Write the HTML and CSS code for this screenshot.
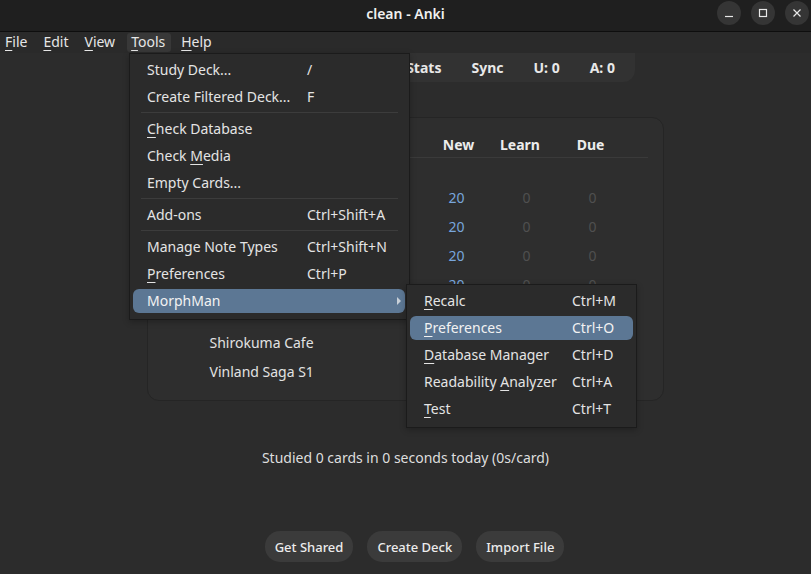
FILE: index.html
```html
<!DOCTYPE html>
<html>
<head>
<meta charset="utf-8">
<title>clean - Anki</title>
<link rel="stylesheet" href="styles.css">
</head>
<body>
<div class="window">
  <header class="titlebar">
    <div></div>
    <div class="title">clean - Anki</div>
    <div class="winbtns">
      <span class="wbtn"><svg width="10" height="10" viewBox="0 0 10 10"><path d="M1 8.5H9" stroke="#e8e8e8" stroke-width="1.2"/></svg></span>
      <span class="wbtn"><svg width="10" height="10" viewBox="0 0 10 10"><rect x="1.5" y="1.5" width="7" height="7" fill="none" stroke="#e8e8e8" stroke-width="1.2"/></svg></span>
      <span class="wbtn"><svg width="10" height="10" viewBox="0 0 10 10"><path d="M1.5 1.5L8.5 8.5M8.5 1.5L1.5 8.5" stroke="#e8e8e8" stroke-width="1.2"/></svg></span>
    </div>
  </header>
  <nav class="menubar">
    <span class="mb"><u>F</u>ile</span>
    <span class="mb"><u>E</u>dit</span>
    <span class="mb"><u>V</u>iew</span>
    <span class="mb active"><u>T</u>ools</span>
    <span class="mb"><u>H</u>elp</span>
  </nav>
  <main class="main">
    <div class="toolbar">
      <span>Decks</span><span>Add</span><span>Browse</span><span>Stats</span><span>Sync</span><span>U: 0</span><span>A: 0</span>
    </div>
    <section class="decks">
      <div class="row head"><span class="name"></span><span>New</span><span class="learn-h">Learn</span><span>Due</span><span></span></div>
      <div class="rule"></div>
      <div class="row"><span class="name">Default</span><span class="new">20</span><span class="zero">0</span><span class="zero">0</span><span></span></div>
      <div class="row"><span class="name">Kaguya-sama</span><span class="new">20</span><span class="zero">0</span><span class="zero">0</span><span></span></div>
      <div class="row"><span class="name">Kimi no Na wa</span><span class="new">20</span><span class="zero">0</span><span class="zero">0</span><span></span></div>
      <div class="row"><span class="name">Mushishi</span><span class="new">20</span><span class="zero">0</span><span class="zero">0</span><span></span></div>
      <div class="row"><span class="name">Natsume</span><span class="new">20</span><span class="zero">0</span><span class="zero">0</span><span></span></div>
      <div class="row"><span class="name">Shirokuma Cafe</span><span class="new">20</span><span class="zero">0</span><span class="zero">0</span><span></span></div>
      <div class="row"><span class="name">Vinland Saga S1</span><span class="new">20</span><span class="zero">0</span><span class="zero">0</span><span></span></div>
    </section>
    <p class="studied">Studied 0 cards in 0 seconds today (0s/card)</p>
    <div class="actions">
      <button class="btn">Get Shared</button>
      <button class="btn">Create Deck</button>
      <button class="btn">Import File</button>
    </div>
  </main>

  <div class="menu tools">
    <div class="mi"><span>Study Deck...</span><span>/</span></div>
    <div class="mi"><span>Create Filtered Deck...</span><span>F</span></div>
    <div class="sep"></div>
    <div class="mi"><span><u>C</u>heck Database</span><span></span></div>
    <div class="mi"><span>Check <u>M</u>edia</span><span></span></div>
    <div class="mi"><span>Empty Cards...</span><span></span></div>
    <div class="sep"></div>
    <div class="mi"><span>Add-ons</span><span>Ctrl+Shift+A</span></div>
    <div class="sep"></div>
    <div class="mi"><span>Manage Note Types</span><span>Ctrl+Shift+N</span></div>
    <div class="mi"><span><u>P</u>references</span><span>Ctrl+P</span></div>
    <div class="mi hl"><span>MorphMan</span><span></span><i class="arrow"></i></div>
  </div>

  <div class="menu sub">
    <div class="mi"><span><u>R</u>ecalc</span><span>Ctrl+M</span></div>
    <div class="mi hl"><span><u>P</u>references</span><span>Ctrl+O</span></div>
    <div class="mi"><span><u>D</u>atabase Manager</span><span>Ctrl+D</span></div>
    <div class="mi"><span>Readability <u>A</u>nalyzer</span><span>Ctrl+A</span></div>
    <div class="mi"><span><u>T</u>est</span><span>Ctrl+T</span></div>
  </div>
</div>
</body>
</html>
```

FILE: styles.css
```css
* { box-sizing: border-box; }
html, body { margin: 0; padding: 0; }
body {
  background: #2c2c2c;
  color: #e2e2e2;
  font-family: "Noto Sans", "Open Sans", sans-serif;
  font-size: 14px;
  width: 811px;
  height: 574px;
  overflow: hidden;
}
.window { position: relative; width: 811px; height: 574px; }

u { text-decoration-thickness: 1px; text-underline-offset: 3px; }

.titlebar {
  height: 32px;
  background: #1f1f1f;
  border-bottom: 1px solid #0e0e0e;
  display: grid;
  grid-template-columns: 1fr auto 1fr;
  align-items: center;
}
.title { font-weight: 600; font-size: 14px; color: #f0f0f0; padding-bottom: 5px; }
.winbtns { justify-self: end; display: flex; gap: 10px; padding-right: 2px; padding-bottom: 5px; }
.wbtn {
  width: 24px; height: 24px; border-radius: 50%;
  background: #353535;
  display: flex; align-items: center; justify-content: center;
}

.menubar {
  height: 21px;
  background: #2a2a2a;
  display: flex;
  align-items: center;
  padding-left: 1px;
  gap: 8px;
}
.mb { padding: 0 4px 1px; height: 19px; line-height: 18px; border-radius: 3px; color: #e6e6e6; }
.mb.active { background: #383838; padding: 0 6px 1px 4px; margin-right: -2px; }

.main { display: flex; flex-direction: column; align-items: center; }

.toolbar {
  height: 29px;
  background: #323232;
  border-radius: 0 0 12px 12px;
  display: flex;
  align-items: center;
  gap: 30px;
  padding: 0 20px;
  font-weight: 700;
  color: #e8e8e8;
}

.decks {
  margin-top: 35px;
  width: 517px;
  height: 284px;
  background: #2e2e2e;
  border: 1px solid #252525;
  border-radius: 12px;
  padding: 11px 15px 0 15px;
  margin-left: -1px;
}
.row {
  display: grid;
  grid-template-columns: 1fr 66px 66px 66px 24px;
  height: 29px;
  align-items: center;
  text-align: center;
}
.row .name { text-align: left; padding-left: 47px; color: #e2e2e2; }
.row.head { height: 28px; padding-top: 2px; font-weight: 700; color: #ececec; }
.learn-h { margin-left: -9px; }
.rule { height: 1px; background: #3a3a3a; margin-bottom: 25px; }
.new { color: #78a6dc; margin-left: -4px; }
.zero { color: #505050; margin-left: 4px; }

.studied { margin: 47px 0 0; line-height: 20px; color: #dedede; }

.actions { margin-top: 63px; margin-left: 18px; display: flex; gap: 14px; }
.btn {
  font-family: inherit;
  font-size: 13px;
  font-weight: 500;
  color: #ececec;
  background: #3b3b3b;
  border: none;
  border-radius: 15px;
  height: 31px;
  padding: 0 10px;
}

.menu {
  position: absolute;
  background: #2b2b2b;
  border: 1px solid #1b1b1b;
  padding: 4px 4px 3px 3px;
  color: #e4e4e4;
  box-shadow: 0 2px 6px rgba(0,0,0,0.25);
}
.menu.tools { left: 129px; top: 53px; width: 281px; }
.menu.sub { left: 406px; top: 284px; width: 231px; padding: 4px 3px 3px 3px; }
.mi {
  position: relative;
  display: grid;
  grid-template-columns: 160px 1fr;
  height: 24px;
  margin-bottom: 3px;
  align-items: center;
  padding-left: 14px;
  padding-bottom: 2px;
  border-radius: 6px;
  white-space: nowrap;
}
.sub .mi { grid-template-columns: 148px 1fr; }
.mi.hl { background: #5c7794; color: #f2f2f2; }
.sep { height: 1px; background: #3c3c3c; margin: 0 7px 4px 8px; }
.arrow {
  position: absolute; right: 4px; top: 8px;
  width: 0; height: 0;
  border-left: 4px solid #c8d0d8;
  border-top: 4px solid transparent;
  border-bottom: 4px solid transparent;
}
```
